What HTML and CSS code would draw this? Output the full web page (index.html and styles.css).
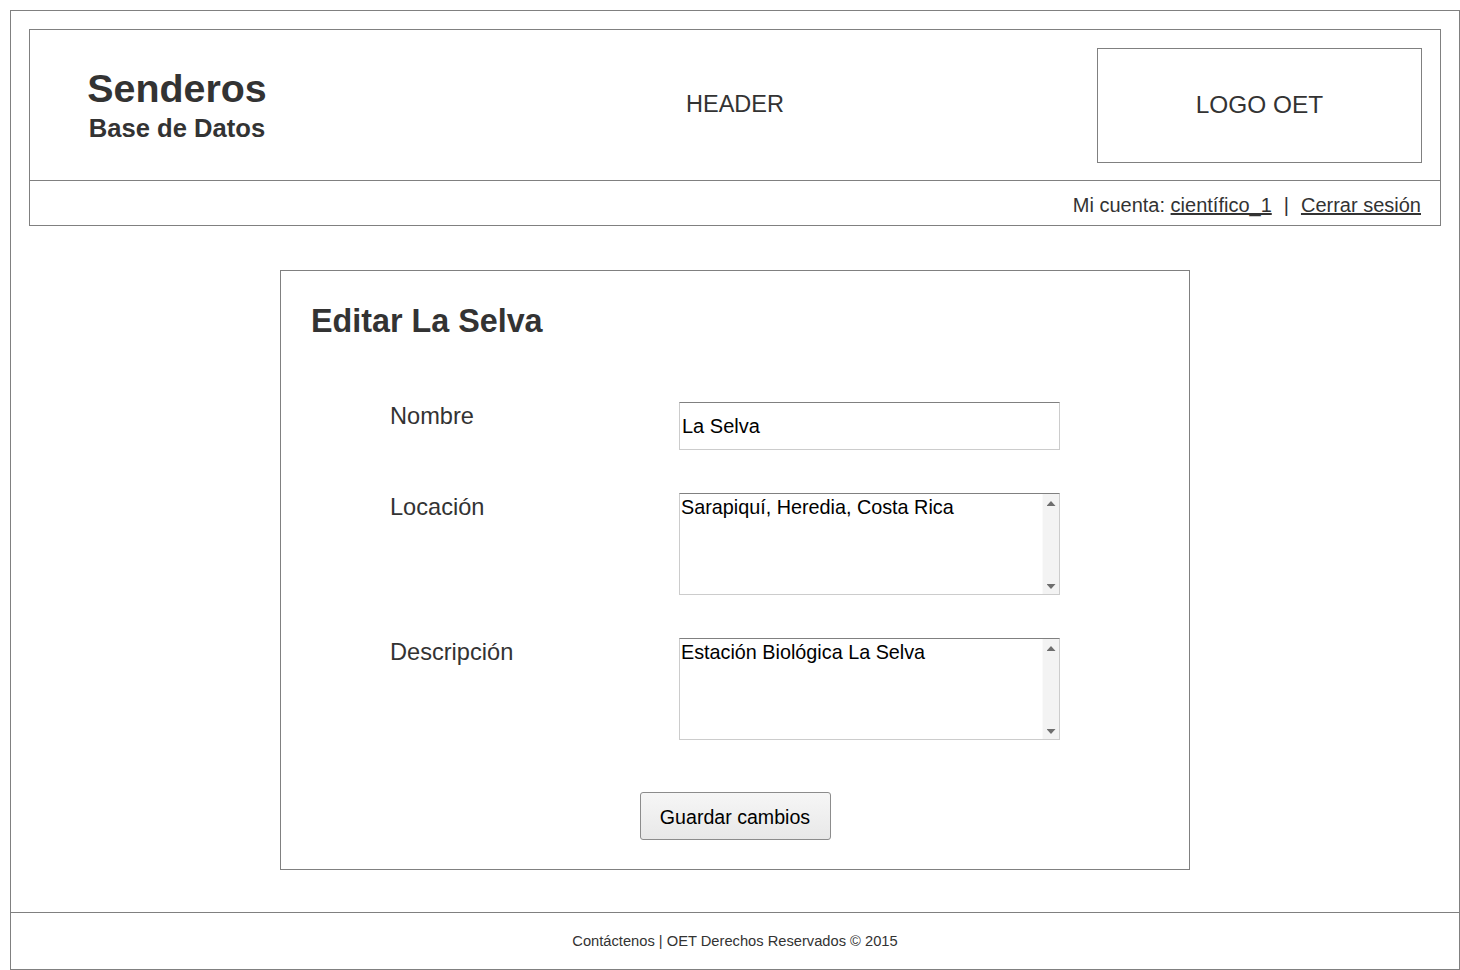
FILE: index.html
```html
<!DOCTYPE html>
<html lang="es">
<head>
<meta charset="utf-8">
<title>Senderos - Editar La Selva</title>
<link rel="stylesheet" href="styles.css">
</head>
<body>
<div class="page">
  <header class="header">
    <div class="header-top">
      <div class="brand">
        <div class="brand-title">Senderos</div>
        <div class="brand-sub">Base de Datos</div>
      </div>
      <div class="header-label">HEADER</div>
      <div class="logo">LOGO OET</div>
    </div>
    <div class="account-bar">
      <span>Mi cuenta: <a href="#" class="link">científico_1</a></span><span class="sep">|</span><a href="#" class="link">Cerrar sesión</a>
    </div>
  </header>

  <main class="main">
    <section class="panel">
      <h1 class="panel-title">Editar La Selva</h1>
      <form class="form">
        <label class="form-label" for="nombre">Nombre</label>
        <input class="text-input" id="nombre" type="text" value="La Selva">

        <label class="form-label" for="locacion">Locación</label>
        <div class="text-area-box">
          <textarea class="text-area" id="locacion">Sarapiquí, Heredia, Costa Rica</textarea>
          <div class="scrollbar"><span class="arrow-up"></span><span class="arrow-down"></span></div>
        </div>

        <label class="form-label" for="descripcion">Descripción</label>
        <div class="text-area-box">
          <textarea class="text-area" id="descripcion">Estación Biológica La Selva</textarea>
          <div class="scrollbar"><span class="arrow-up"></span><span class="arrow-down"></span></div>
        </div>
      </form>
      <div class="actions">
        <button class="btn" type="button">Guardar cambios</button>
      </div>
    </section>
  </main>

  <footer class="footer">Contáctenos | OET Derechos Reservados © 2015</footer>
</div>
</body>
</html>
```

FILE: styles.css
```css
* {
  box-sizing: border-box;
}

html, body {
  margin: 0;
  padding: 0;
  background: #ffffff;
}

body {
  font-family: "Liberation Sans", Arial, sans-serif;
  color: #333333;
}

.page {
  margin: 10px 0 0 10px;
  width: 1450px;
  height: 960px;
  border: 1px solid #808080;
  display: flex;
  flex-direction: column;
}

/* Header */
.header {
  margin: 18px 18px 0 18px;
  border: 1px solid #808080;
}

.header-top {
  height: 151px;
  border-bottom: 1px solid #808080;
  display: grid;
  grid-template-columns: 1fr 1fr 1fr;
  align-items: center;
}

.brand {
  width: 294px;
  text-align: center;
  font-weight: bold;
  justify-self: start;
}

.brand-title {
  font-size: 39.4px;
  line-height: 40px;
}

.brand-sub {
  font-size: 25.6px;
  line-height: 30px;
  margin-top: 5px;
}

.header-label {
  text-align: center;
  font-size: 23.5px;
  line-height: 26px;
  margin-top: -2px;
}

.logo {
  justify-self: end;
  margin-right: 18px;
  width: 325px;
  height: 115px;
  border: 1px solid #808080;
  display: flex;
  align-items: center;
  justify-content: center;
  font-size: 24.4px;
}

.account-bar {
  height: 44px;
  display: flex;
  justify-content: flex-end;
  align-items: center;
  padding: 4px 19px 0 0;
  font-size: 20px;
}

.link {
  color: #333333;
  text-decoration: underline;
}

.sep {
  margin: 0 12px 0 12px;
}

/* Main panel */
.main {
  padding-top: 44px;
}

.panel {
  margin: 0 auto;
  width: 910px;
  height: 600px;
  border: 1px solid #808080;
  padding: 32px 0 0 0;
}

.panel-title {
  margin: 0 0 0 30px;
  font-size: 32.3px;
  line-height: 37px;
  font-weight: bold;
}

.form {
  margin: 62px 0 0 109px;
  display: grid;
  grid-template-columns: 289px 381px;
  row-gap: 43px;
  align-items: start;
}

.form-label {
  font-size: 23.6px;
  line-height: 24px;
  padding-top: 2px;
}

.text-input {
  width: 381px;
  height: 48px;
  border: 1px solid #cccccc;
  border-top-color: #808080;
  padding: 1px 2px 0 2px;
  font-family: "Liberation Sans", Arial, sans-serif;
  font-size: 20px;
  color: #000000;
  outline: none;
}

.text-area-box {
  width: 381px;
  height: 102px;
  border: 1px solid #cccccc;
  border-top-color: #808080;
  display: flex;
}

.text-area {
  flex: 1;
  border: none;
  resize: none;
  overflow: hidden;
  padding: 2px 1px 0 1px;
  margin: 0;
  font-family: "Liberation Sans", Arial, sans-serif;
  font-size: 19.8px;
  line-height: 23px;
  color: #000000;
  outline: none;
}

.scrollbar {
  width: 17px;
  background: #f3f3f3;
  border-left: 1px solid #fafafa;
  display: flex;
  flex-direction: column;
  justify-content: space-between;
  align-items: center;
  padding: 7px 0 5px 0;
}

.arrow-up,
.arrow-down {
  display: block;
  width: 9px;
  height: 5px;
  background: #6e6e6e;
}

.arrow-up {
  clip-path: polygon(50% 0, 100% 100%, 0 100%);
}

.arrow-down {
  clip-path: polygon(0 0, 100% 0, 50% 100%);
}

.actions {
  display: flex;
  justify-content: center;
  margin-top: 52px;
}

.btn {
  width: 191px;
  height: 48px;
  border: 1px solid #8c8c8c;
  border-radius: 3px;
  background: linear-gradient(#f6f6f6, #e8e8e8);
  font-family: "Liberation Sans", Arial, sans-serif;
  font-size: 19.6px;
  color: #000000;
  padding: 2px 0 0 0;
}

/* Footer */
.footer {
  margin-top: auto;
  height: 57px;
  border-top: 1px solid #808080;
  display: flex;
  align-items: center;
  justify-content: center;
  font-size: 14.7px;
}
```
